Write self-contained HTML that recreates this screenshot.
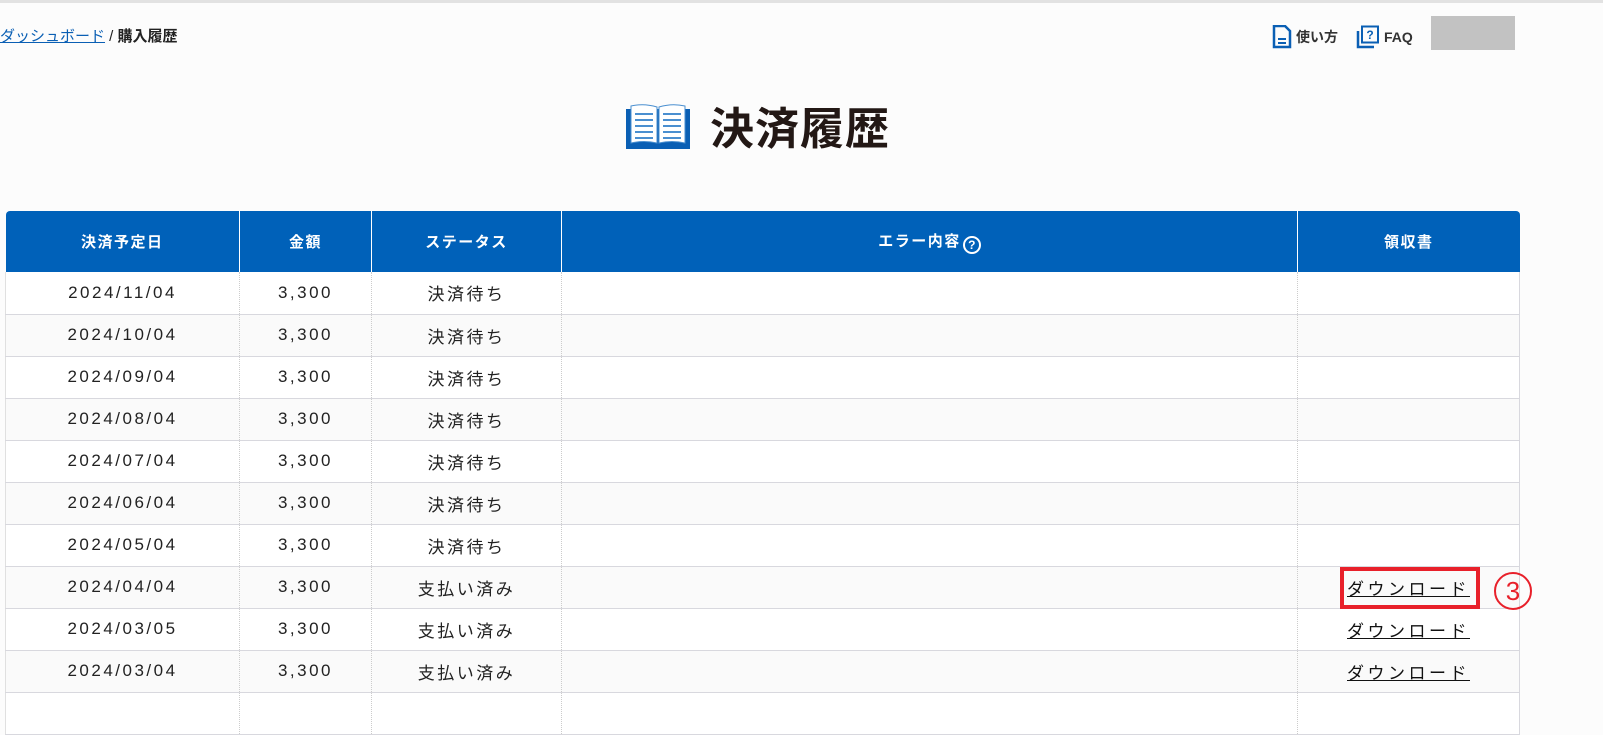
<!DOCTYPE html>
<html><head><meta charset="utf-8"><style>
*{margin:0;padding:0;box-sizing:border-box}
body{width:1603px;height:714px;overflow:hidden;background:#fcfcfc;font-family:"Liberation Sans","Noto Sans CJK JP",sans-serif;position:relative;border-top:3px solid #e2e2e2}
.bc{position:absolute;left:0;top:22px;font-size:15px;color:#222}
.bc a{color:#0a5fb4;text-decoration:underline}
.nav{position:absolute;top:22px;font-size:14px;font-weight:bold;color:#333;display:flex;align-items:center;gap:4px}
.gray{position:absolute;left:1431px;top:13px;width:84px;height:34px;background:#c2c2c2}
.title{position:absolute;left:710px;top:90px;font-size:44px;font-weight:bold;color:#231815;letter-spacing:1px}
table{position:absolute;left:5px;top:208px;width:1514px;border-collapse:collapse;table-layout:fixed}
th{background:#0061b9;color:#fff;font-size:15px;font-weight:bold;height:61px;letter-spacing:1.5px;border-left:1px solid #fff}
th:first-child{border-left:none;border-top-left-radius:4px}
th:last-child{border-top-right-radius:4px}
td{height:42px;text-align:center;font-size:17px;color:#222;letter-spacing:2.5px;border-bottom:1px solid #d8d8de;border-left:1px dotted #ccc;background:#fff}
td:first-child{border-left:1px solid #e0e0e0}
td:last-child{border-right:1px solid #d8d8de}
tr:nth-child(odd) td{background:#fafafa}
td a{color:#111;text-decoration:underline;letter-spacing:3.5px}
.box{position:absolute;left:1340px;top:564px;width:140px;height:42px;border:4px solid #e8202a}
.n3{position:absolute;left:1494px;top:569px;width:38px;height:38px;border:2px solid #e8202a;border-radius:50%;color:#e8202a;font-size:26px;text-align:center;line-height:34px}
</style></head><body>
<div class="bc"><a>ダッシュボード</a> / <b style="font-weight:bold">購入履歴</b></div>
<div class="nav" style="left:1272px"><svg width="20" height="24" viewBox="0 0 20 24"><path d="M2 1h11l5 5v16H2z" fill="none" stroke="#0a5fb4" stroke-width="2.5"/><path d="M6 14h8M6 18h8" stroke="#0a5fb4" stroke-width="2"/></svg>使い方</div>
<div class="nav" style="left:1356px"><svg width="24" height="24" viewBox="0 0 24 24"><path d="M2 6v16h16" fill="none" stroke="#0a5fb4" stroke-width="2.5"/><rect x="6" y="1.5" width="16" height="16" fill="none" stroke="#0a5fb4" stroke-width="2"/><text x="14" y="14" font-size="12" font-weight="bold" fill="#0a5fb4" text-anchor="middle" font-family="Liberation Sans">?</text></svg>FAQ</div>
<div class="gray"></div>
<svg style="position:absolute;left:626px;top:100px" width="64" height="46" viewBox="0 0 64 46"><rect x="0" y="6" width="64" height="40" fill="#0a5fb4"/><path d="M5 3q13-3 26 1v36q-13-3-26 0z" fill="#fff" stroke="#4a8fd0" stroke-width="1"/><path d="M33 4q13-4 26-1v37q-13-3-26 0z" fill="#fff" stroke="#4a8fd0" stroke-width="1"/><g stroke="#4a8fd0" stroke-width="2"><path d="M9 11h18M9 17h18M9 23h18M9 29h18M9 35h18M37 11h18M37 17h18M37 23h18M37 29h18M37 35h18"/></g></svg>
<div class="title">決済履歴</div>
<table>
<colgroup><col style="width:234px"><col style="width:132px"><col style="width:190px"><col style="width:736px"><col style="width:222px"></colgroup>
<tr><th>決済予定日</th><th>金額</th><th>ステータス</th><th>エラー内容<span style="display:inline-block;width:18px;height:18px;border:2px solid #fff;border-radius:50%;font-size:12px;line-height:14px;vertical-align:-3px;margin-left:2px;letter-spacing:0">?</span></th><th>領収書</th></tr>
<tr><td>2024/11/04</td><td>3,300</td><td>決済待ち</td><td></td><td></td></tr>
<tr><td>2024/10/04</td><td>3,300</td><td>決済待ち</td><td></td><td></td></tr>
<tr><td>2024/09/04</td><td>3,300</td><td>決済待ち</td><td></td><td></td></tr>
<tr><td>2024/08/04</td><td>3,300</td><td>決済待ち</td><td></td><td></td></tr>
<tr><td>2024/07/04</td><td>3,300</td><td>決済待ち</td><td></td><td></td></tr>
<tr><td>2024/06/04</td><td>3,300</td><td>決済待ち</td><td></td><td></td></tr>
<tr><td>2024/05/04</td><td>3,300</td><td>決済待ち</td><td></td><td></td></tr>
<tr><td>2024/04/04</td><td>3,300</td><td>支払い済み</td><td></td><td><a>ダウンロード</a></td></tr>
<tr><td>2024/03/05</td><td>3,300</td><td>支払い済み</td><td></td><td><a>ダウンロード</a></td></tr>
<tr><td>2024/03/04</td><td>3,300</td><td>支払い済み</td><td></td><td><a>ダウンロード</a></td></tr>
<tr><td></td><td></td><td></td><td></td><td></td></tr>
</table>
<div class="box"></div>
<div class="n3">3</div>
</body></html>
